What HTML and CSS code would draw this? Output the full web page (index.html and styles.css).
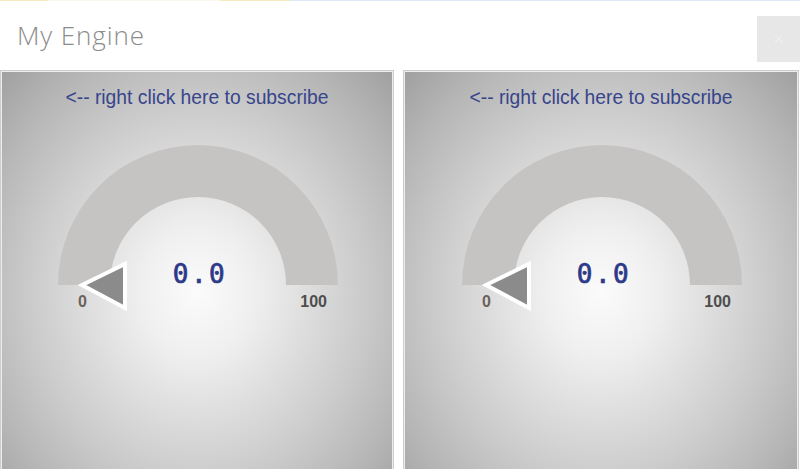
FILE: index.html
```html
<!DOCTYPE html>
<html>
<head>
<meta charset="utf-8">
<title>My Engine</title>
<link rel="stylesheet" href="styles.css">
</head>
<body>
<div class="window">
  <div class="topline"></div>
  <header class="titlebar">
    <h1 class="title">My Engine</h1>
    <button class="close">×</button>
  </header>
  <main class="panels">
    <section class="panel">
      <div class="face">
        <div class="label">&lt;-- right click here to subscribe</div>
        <svg class="gauge" viewBox="0 0 389 300" width="389" height="300">
          <path class="band" d="M55 176 A140 140 0 0 1 335 176 L283 176 A88 88 0 0 0 107 176 Z"/>
          <text class="value" x="197" y="174">0.0</text>
          <text class="min" x="75" y="198">0</text>
          <text class="max" x="324" y="198">100</text>
          <polygon class="pointer" points="79,176 122,155 122,199"/>
        </svg>
      </div>
    </section>
    <section class="panel">
      <div class="face">
        <div class="label">&lt;-- right click here to subscribe</div>
        <svg class="gauge" viewBox="0 0 389 300" width="389" height="300">
          <path class="band" d="M55 176 A140 140 0 0 1 335 176 L283 176 A88 88 0 0 0 107 176 Z"/>
          <text class="value" x="197" y="174">0.0</text>
          <text class="min" x="75" y="198">0</text>
          <text class="max" x="324" y="198">100</text>
          <polygon class="pointer" points="79,176 122,155 122,199"/>
        </svg>
      </div>
    </section>
  </main>
</div>
</body>
</html>
```

FILE: styles.css
```css
html, body {
  margin: 0;
  padding: 0;
  background: #ffffff;
  overflow: hidden;
}

.window {
  width: 800px;
  height: 469px;
  overflow: hidden;
}

.topline {
  height: 1px;
  background: linear-gradient(to right,
    #f6ecbd 0, #f6ecbd 48px,
    #faf8f0 48px, #faf8f0 220px,
    #f6ecbd 220px, #f6ecbd 290px,
    #dce8f6 290px, #dce8f6 100%);
}

.titlebar {
  height: 69px;
  display: flex;
  align-items: flex-start;
}

.title {
  margin: 0;
  padding: 19px 0 0 17px;
  font-family: "Open Sans", "Noto Sans", sans-serif;
  font-weight: 300;
  font-size: 26px;
  line-height: 30px;
  letter-spacing: 0.9px;
  color: #8c8c8c;
}

.close {
  margin: 15px 0 0 auto;
  width: 43px;
  height: 46px;
  border: 0;
  padding: 0;
  background: #e7e7e7;
  color: #eeeeee;
  font-family: "Liberation Sans", sans-serif;
  font-size: 18px;
}

.panels {
  display: flex;
  gap: 9px;
}

.panel {
  width: 390px;
  height: 410px;
  border: 1px solid #cdcdcd;
  padding: 1px;
  background: #ededed;
  flex: none;
}

.panel + .panel {
  width: 392px;
}

.face {
  height: 100%;
  box-sizing: border-box;
  padding-top: 15px;
  background: radial-gradient(ellipse 320px 360px at 50% 220px,
    #fbfbfb 0, #efefef 18%, #dedede 34%, #cbcbcb 52%,
    #b6b6b6 70%, #9e9e9e 88%, #8c8c8c 100%);
  display: flex;
  flex-direction: column;
  align-items: center;
}

.label {
  font-family: "Liberation Sans", Arial, sans-serif;
  font-size: 19.3px;
  line-height: 22px;
  color: #37458c;
  white-space: nowrap;
}

.gauge {
  display: block;
  flex: none;
}

.band {
  fill: #c6c4c3;
}

.value {
  font-family: "DejaVu Sans Mono", monospace;
  font-size: 26px;
  letter-spacing: 2.5px;
  fill: #2c3888;
  stroke: #2c3888;
  stroke-width: 0.7px;
  text-anchor: middle;
}

.min, .max {
  font-family: "Liberation Sans", Arial, sans-serif;
  font-weight: bold;
  font-size: 16px;
  fill: #4e4e4e;
}

.min {
  fill: #6a625a;
}

.max {
  text-anchor: end;
}

.pointer {
  fill: #8b8b8b;
  stroke: #ffffff;
  stroke-width: 4px;
  stroke-linejoin: miter;
}
```
